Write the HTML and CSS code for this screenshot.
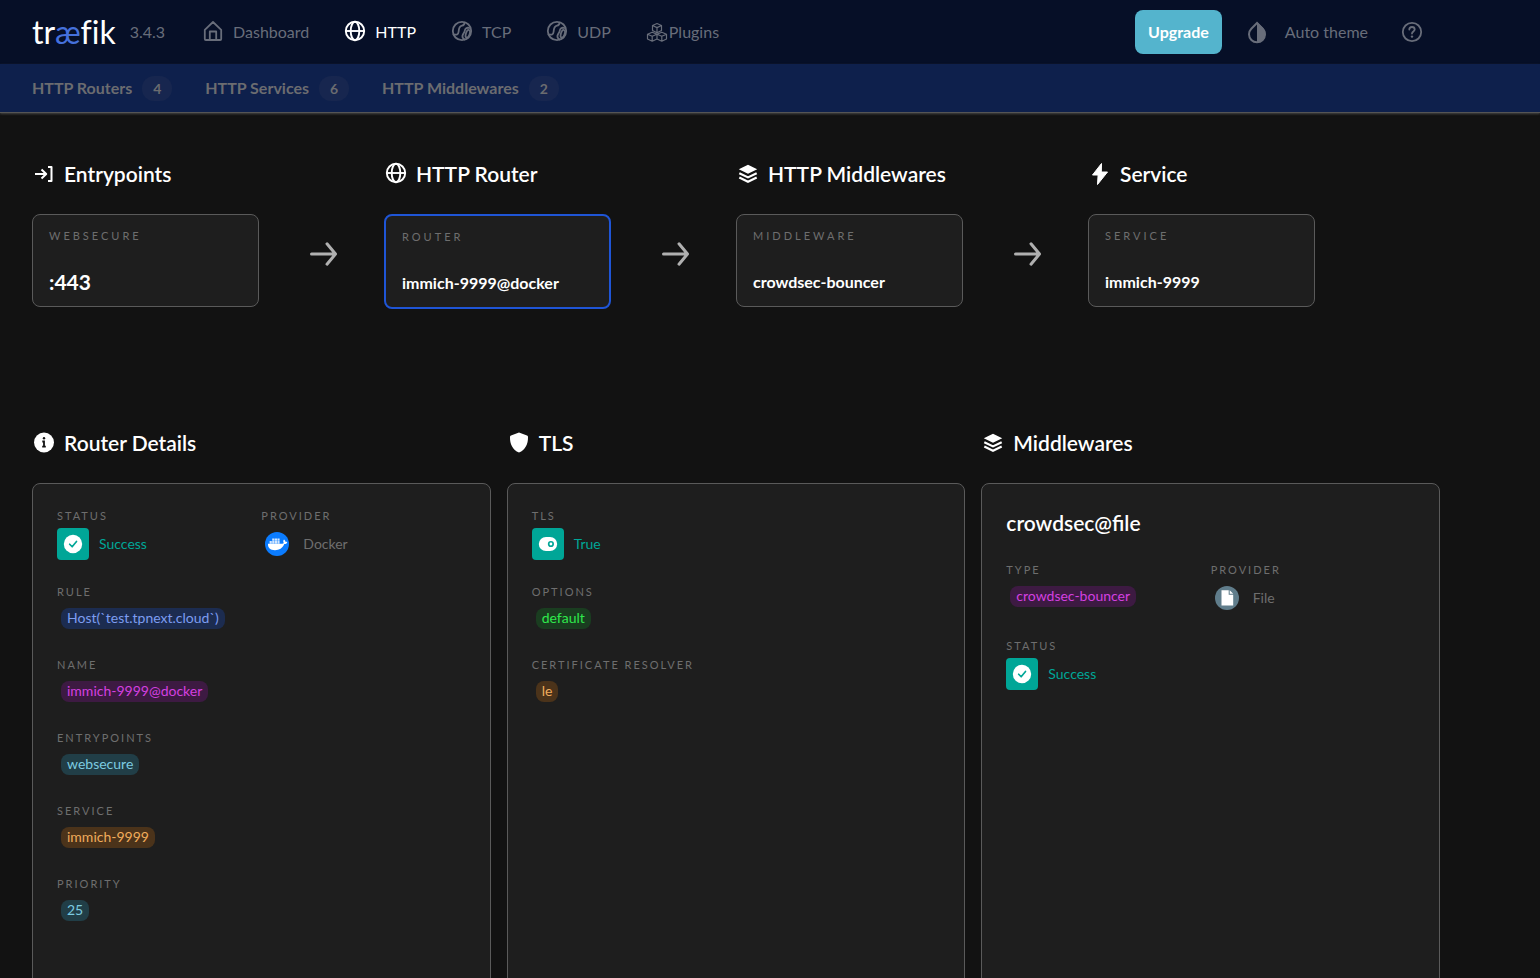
FILE: index.html
```html
<!DOCTYPE html>
<html lang="en">
<head>
  <meta charset="UTF-8" />
  <meta name="viewport" content="width=device-width, initial-scale=1.0" />
  <title>Traefik Proxy</title>
  <link rel="stylesheet" href="styles.css">
</head>
<body>
  <!-- shared icons -->
  <svg class="sprite" aria-hidden="true">
    <symbol id="globe" viewBox="0 0 24 24">
      <g fill="none" stroke="currentColor" stroke-width="1.9">
        <circle cx="12" cy="11" r="9.2" />
        <ellipse cx="12" cy="11" rx="4.3" ry="9.2" />
        <path d="M3 11h18" />
      </g>
    </symbol>
    <symbol id="ball" viewBox="0 0 24 24">
      <g fill="none" stroke="currentColor" stroke-width="1.8" stroke-linecap="round">
        <circle cx="12" cy="11" r="9.2" />
        <path d="M3.600 14.300c2.900 1 4.800.2 5-2.500.2-3.600.6-5.700 3.400-6.200 1.700-.3 2.500-1.200 2.600-3" />
        <path d="M14.600 19.500c-2.100-1.300-2.700-3-1.700-5 .8-1.500 1.500-2 1.800-3.700.4-2.300 2.100-3.600 4.600-2.800" />
        <ellipse cx="17.800" cy="13.800" rx="1.900" ry="4" transform="rotate(18 17.800 13.800)" />
      </g>
    </symbol>
    <symbol id="layers" viewBox="0 0 24 24">
      <path fill="currentColor" d="M12 2.800 21.200 7.300 12 11.800 2.800 7.300Z" />
      <path fill="none" stroke="currentColor" stroke-width="2.200" d="M3.300 11.200 12 15.400l8.700-4.200M3.300 15.500 12 19.700l8.700-4.200" />
    </symbol>
    <symbol id="arrow" viewBox="0 0 32 32">
      <path fill="none" stroke="currentColor" stroke-width="3" stroke-linecap="round" stroke-linejoin="round" d="M3.500 16h24M19 5.800 27.500 16 19 26.200" />
    </symbol>
    <symbol id="check" viewBox="0 0 24 24">
      <circle cx="12" cy="12" r="11" fill="#fff" />
      <path fill="none" stroke="#00a697" stroke-width="2" stroke-linecap="round" stroke-linejoin="round" d="m8 12.300 3 3 5.200-6.300" />
    </symbol>
  </svg>

  <header>
    <div class="topbar">
      <div class="container">
        <a class="logo" href="#">tr<span>æ</span>fik</a>
        <span class="version">3.4.3</span>
        <nav class="nav">
          <a href="#">
            <svg viewBox="0 0 24 24"><path fill="none" stroke="currentColor" stroke-width="1.8" stroke-linejoin="round" d="M3.800 9.800 12 2l8.200 7.800v9.200a1 1 0 0 1-1 1H4.800a1 1 0 0 1-1-1ZM8.800 20v-8.500h6.400V20" /></svg>
            Dashboard
          </a>
          <a href="#" class="active"><svg><use href="#globe" /></svg>HTTP</a>
          <a href="#"><svg><use href="#ball" /></svg>TCP</a>
          <a href="#"><svg><use href="#ball" /></svg>UDP</a>
          <a href="#" class="plugins">
            <svg viewBox="0 0 24 24"><path fill="none" stroke="currentColor" stroke-width="1.200" stroke-linejoin="round" d="M12 3.500 16.500 5.500v5L12 12.700l-4.500-2.200v-5ZM7.500 5.500 12 7.600l4.500-2.100M12 7.600v5M7.200 12.200l4.800 2v4.800l-4.800 2.200L2.500 19v-4.800ZM2.500 14.200l4.700 2.100 4.800-2.100M7.200 16.300v4.900M16.800 12.200l4.700 2V19l-4.700 2.200L12 19v-4.800ZM12 14.200l4.800 2.100 4.700-2.100M16.800 16.300v4.900" /></svg>
            Plugins
          </a>
        </nav>
        <div class="actions">
          <button class="upgrade">Upgrade</button>
          <button class="theme">
            <svg viewBox="0 0 24 24"><path fill="none" stroke="currentColor" stroke-width="2" d="M12 3 6.300 8.700a8 8 0 1 0 11.400 0Z" /><path fill="currentColor" d="M12 2v20.400a8.700 8.700 0 0 0 6-14.700Z" /></svg>
            Auto theme
          </button>
          <button class="help" aria-label="Help">
            <svg viewBox="0 0 24 24"><g fill="none" stroke="currentColor" stroke-width="1.800" stroke-linecap="round"><circle cx="12" cy="12" r="9.200" /><path d="M9.300 9.600c0-1.600 1.200-2.600 2.700-2.600s2.700 1 2.700 2.500c0 1.900-2.700 2-2.700 4" /></g><circle cx="12" cy="16.600" r="1.200" fill="currentColor" /></svg>
          </button>
        </div>
      </div>
    </div>
    <nav class="subbar">
      <div class="container">
        <a href="#">HTTP Routers <span class="count">4</span></a>
        <a href="#">HTTP Services <span class="count">6</span></a>
        <a href="#">HTTP Middlewares <span class="count">2</span></a>
      </div>
    </nav>
  </header>

  <main>
    <div class="container">
      <section class="flow">
        <div class="step">
          <h2><svg viewBox="0 0 24 24"><path fill="none" stroke="currentColor" stroke-width="2" stroke-linejoin="round" d="M3 12h11M9.500 7.500l4.700 4.500-4.700 4.500M16 5h3.500v14H16" /></svg>Entrypoints</h2>
          <div class="step-row">
            <div class="flow-card"><span class="label">WEBSECURE</span><strong class="port">:443</strong></div>
            <svg class="arrow"><use href="#arrow" /></svg>
          </div>
        </div>
        <div class="step">
          <h2><svg viewBox="0 1 24 24"><use href="#globe" y="1" width="24" height="24" /></svg>HTTP Router</h2>
          <div class="step-row">
            <div class="flow-card current"><span class="label">ROUTER</span><strong>immich-9999@docker</strong></div>
            <svg class="arrow"><use href="#arrow" /></svg>
          </div>
        </div>
        <div class="step">
          <h2><svg><use href="#layers" /></svg>HTTP Middlewares</h2>
          <div class="step-row">
            <div class="flow-card"><span class="label">MIDDLEWARE</span><strong>crowdsec-bouncer</strong></div>
            <svg class="arrow"><use href="#arrow" /></svg>
          </div>
        </div>
        <div class="step">
          <h2><svg viewBox="0 0 24 24"><path fill="currentColor" stroke="currentColor" stroke-linejoin="round" d="M13.500 1.500 4.500 13h5.600l-.6 9.500L19.500 10h-6.200Z" /></svg>Service</h2>
          <div class="step-row">
            <div class="flow-card"><span class="label">SERVICE</span><strong>immich-9999</strong></div>
          </div>
        </div>
      </section>

      <section class="details">
        <div class="panel">
          <h2><svg viewBox="0 0 24 24"><circle cx="12" cy="11.500" r="10" fill="currentColor" /><path fill="none" stroke="#121212" stroke-width="1.800" d="M10.300 10.500h1.700v5M10.200 15.700h3.600" /><circle cx="12" cy="7.300" r="1.200" fill="#121212" /></svg>Router Details</h2>
          <div class="card">
            <div class="pair">
              <div class="field"><span class="label">STATUS</span>
                <div class="value ok"><span class="tile"><svg><use href="#check" /></svg></span>Success</div>
              </div>
              <div class="field"><span class="label">PROVIDER</span>
                <div class="value">
                  <span class="provider">
                    <svg viewBox="0 0 24 24">
                      <circle cx="12" cy="12" r="12" fill="#0b7cff" />
                      <path fill="#fff" d="M3 11.800h14.200c.8 0 1.300-.3 1.600-.7-.9-1.300-.6-2.700.2-3.500.9.600 1.300 1.300 1.400 2.200.7-.1 1.400 0 1.900.4-.5 1.300-1.500 1.900-3 1.900-1.800 4.300-5 6.100-9.300 6.100-4.700 0-7.300-2.300-7-6.400Z" />
                      <path fill="#d5e8ff" d="M4.600 9.100h2.200v2.700H4.600ZM7.200 9.100h2.200v2.700H7.200ZM9.800 9.100H12v2.700H9.800ZM12.400 9.100h2.200v2.700h-2.200ZM7.200 6.500h2.200v2.200H7.200ZM9.800 6.500H12v2.200H9.800ZM12.400 6.500h2.200v2.200h-2.200Z" />
                    </svg>
                  </span>Docker
                </div>
              </div>
            </div>
            <div class="field"><span class="label">RULE</span><span class="badge blue">Host(`test.tpnext.cloud`)</span></div>
            <div class="field"><span class="label">NAME</span><span class="badge purple">immich-9999@docker</span></div>
            <div class="field"><span class="label">ENTRYPOINTS</span><span class="badge cyan">websecure</span></div>
            <div class="field"><span class="label">SERVICE</span><span class="badge orange">immich-9999</span></div>
            <div class="field"><span class="label">PRIORITY</span><span class="badge cyan">25</span></div>
          </div>
        </div>

        <div class="panel">
          <h2><svg viewBox="0 0 24 24"><path fill="currentColor" d="M12 1.500l8 3c.7.300 1 .7 1 1.400.2 7-2.500 12.700-9 15.600C5.500 18.600 2.800 12.900 3 5.900c0-.7.300-1.100 1-1.400Z" /></svg>TLS</h2>
          <div class="card">
            <div class="field"><span class="label">TLS</span>
              <div class="value ok"><span class="tile"><svg viewBox="0 0 24 24"><rect x="1" y="3.500" width="22" height="17" rx="8.500" fill="#fff" /><circle cx="15.500" cy="12" r="2.700" fill="#fff" stroke="#00a697" stroke-width="2" /></svg></span>True</div>
            </div>
            <div class="field"><span class="label">OPTIONS</span><span class="badge green">default</span></div>
            <div class="field"><span class="label">CERTIFICATE RESOLVER</span><span class="badge orange">le</span></div>
          </div>
        </div>

        <div class="panel">
          <h2><svg><use href="#layers" /></svg>Middlewares</h2>
          <div class="card">
            <h3>crowdsec@file</h3>
            <div class="pair">
              <div class="field"><span class="label">TYPE</span><span class="badge purple">crowdsec-bouncer</span></div>
              <div class="field"><span class="label">PROVIDER</span>
                <div class="value">
                  <span class="provider">
                    <svg viewBox="0 0 24 24"><circle cx="12" cy="12" r="12" fill="#607d8b" /><path fill="#fff" d="M6.500 4.300h7.200V8.700h4.500V19.500H6.500ZM14.700 4.300l3.500 3.400h-3.500Z" /></svg>
                  </span>File
                </div>
              </div>
            </div>
            <div class="field"><span class="label">STATUS</span>
              <div class="value ok"><span class="tile"><svg><use href="#check" /></svg></span>Success</div>
            </div>
          </div>
        </div>
      </section>
    </div>
  </main>
</body>
</html>
```
FILE: styles.css
```css
* {
  box-sizing: border-box;
}
body {
  margin: 0;
  height: 100vh;
  display: flex;
  flex-direction: column;
  font-family: Lato, sans-serif;
  font-size: 16px;
  line-height: 24px;
  background: #121212;
  color: #fff;
}
.sprite {
  display: none;
}
svg {
  width: 24px;
  height: 24px;
  flex: none;
}
a {
  color: inherit;
  text-decoration: none;
}
button {
  font: inherit;
  color: inherit;
  background: none;
  border: none;
  padding: 0;
  cursor: pointer;
}
.container {
  max-width: 1472px;
  padding: 0 32px;
}

/* header */
.topbar {
  background: #060f27;
  color: #686d7a;
}
.topbar .container {
  display: flex;
  align-items: center;
  height: 64px;
}
.logo {
  font-size: 32px;
  line-height: 40px;
  color: #fff;
  /* keeps f and i apart in the wordmark */
  font-variant-ligatures: none;
}
.logo span {
  color: #4571dc;
}
.version {
  margin-left: 14px;
}
.nav {
  display: flex;
  gap: 34px;
  margin-left: 36px;
}
.nav a {
  display: flex;
  align-items: center;
  gap: 8px;
}
.nav .active {
  color: #fff;
}
.nav .plugins {
  gap: 0;
}
.actions {
  display: flex;
  align-items: center;
  margin-left: auto;
}
.upgrade {
  height: 44px;
  padding: 0 13px;
  border-radius: 8px;
  background: #54b4cd;
  color: #fff;
  font-weight: 700;
}
.theme {
  display: flex;
  align-items: center;
  gap: 16px;
  margin-left: 23px;
}
.help {
  display: flex;
  margin: 0 16px 0 32px;
}
.subbar {
  background: #0e204c;
  color: #6b6c70;
  border-bottom: 1px solid #555;
  box-shadow: 0 1px 2px #444;
  font-weight: 700;
}
.subbar .container {
  display: flex;
  gap: 33px;
  height: 48px;
}
.subbar a {
  display: flex;
  align-items: center;
  gap: 10px;
}
.count {
  width: 30px;
  border-radius: 12px;
  background: #17264f;
  font-size: 14px;
  line-height: 25px;
  text-align: center;
}

/* content */
main {
  flex: 1;
  overflow-y: auto;
  scrollbar-width: none;
  padding: 49px 0 48px;
}
h2 {
  display: flex;
  align-items: center;
  gap: 8px;
  margin: 0 0 28px;
  font-size: 21px;
  line-height: 24px;
  font-weight: 600;
}
.label {
  display: block;
  color: #6e6e6e;
  font-size: 11px;
  line-height: 16px;
  letter-spacing: 2px;
}
.flow {
  display: grid;
  grid-template-columns: repeat(4, 1fr);
  min-height: 269px;
}
.step-row {
  display: flex;
  align-items: flex-start;
}
.flow-card {
  flex: 1;
  max-width: calc(100% - 125px);
  padding: 12px 16px;
  border: 1px solid #5a5a5a;
  border-radius: 8px;
  background: #1e1e1e;
}
.flow-card.current {
  border: 2px solid #1f55d6;
}
.flow-card .label {
  margin-bottom: 24px;
  line-height: 18px;
  letter-spacing: 3px;
}
.flow-card strong {
  display: block;
  line-height: 25px;
}
.flow-card .port {
  font-size: 21px;
}
.arrow {
  width: 32px;
  height: 32px;
  margin: 24px 44px 0 49px;
  color: #b0b0b0;
}
.details {
  display: grid;
  grid-template-columns: repeat(3, 1fr);
  gap: 16px;
}
.panel {
  display: flex;
  flex-direction: column;
}
.card {
  flex: 1;
  display: flex;
  flex-direction: column;
  gap: 24px;
  min-height: 600px;
  padding: 24px;
  border: 1px solid #5a5a5a;
  border-radius: 8px;
  background: #1e1e1e;
}
h3 {
  margin: 0;
  font-size: 21px;
  line-height: 30px;
  font-weight: 600;
}
.pair {
  display: grid;
  grid-template-columns: 1fr 1fr;
}
.value {
  display: flex;
  align-items: center;
  gap: 10px;
  margin-top: 4px;
  color: #6e6e6e;
  font-size: 14px;
}
.ok {
  color: #00a697;
}
.tile,
.provider {
  display: flex;
  align-items: center;
  justify-content: center;
  width: 32px;
  height: 32px;
}
.tile {
  border-radius: 4px;
  background: #00a697;
}
.tile svg {
  width: 20px;
  height: 20px;
}
.badge {
  display: block;
  width: fit-content;
  margin: 8px 4px 4px;
  padding: 0 6px 2px;
  border-radius: 8px;
  font-size: 14px;
  line-height: 19px;
}
.blue {
  background: #1c2c50;
  color: #7d9df0;
}
.purple {
  background: #3d1a42;
  color: #d440e0;
}
.cyan {
  background: #213e47;
  color: #7ccbe0;
}
.orange {
  background: #4b331a;
  color: #f0ac5c;
}
.green {
  background: #1a3d20;
  color: #2fe84c;
}
```
